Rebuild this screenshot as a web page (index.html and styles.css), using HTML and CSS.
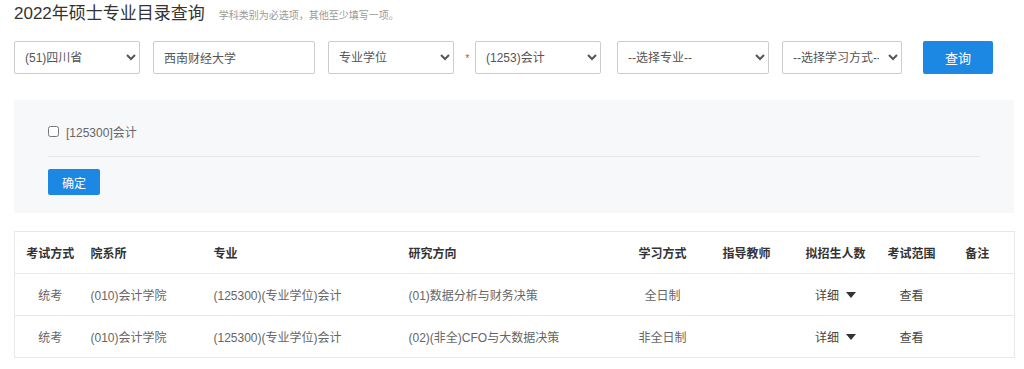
FILE: index.html
```html
<!DOCTYPE html>
<html lang="zh-CN">
<head>
<meta charset="utf-8">
<title>2022年硕士专业目录查询</title>
<link rel="stylesheet" href="styles.css">
</head>
<body>
<div class="page">
  <div class="title-row">
    <h1 class="title">2022年硕士专业目录查询</h1>
    <span class="hint">学科类别为必选项，其他至少填写一项。</span>
  </div>
  <form class="filters">
    <select class="ctl sel-prov"><option>(51)四川省</option></select>
    <input class="ctl inp-school" type="text" value="西南财经大学">
    <select class="ctl sel-type"><option>专业学位</option></select>
    <span class="req">*</span>
    <select class="ctl sel-subject"><option>(1253)会计</option></select>
    <select class="ctl sel-major"><option>--选择专业--</option></select>
    <select class="ctl sel-mode"><option>--选择学习方式--</option></select>
    <button class="btn btn-query" type="button">查询</button>
  </form>
  <div class="panel">
    <label class="check"><input type="checkbox"><span>[125300]会计</span></label>
    <div class="divider"></div>
    <button class="btn btn-ok" type="button">确定</button>
  </div>
  <table class="result">
    <colgroup>
      <col class="c1"><col class="c2"><col class="c3"><col class="c4"><col class="c5"><col class="c6"><col class="c7"><col class="c8"><col class="c9">
    </colgroup>
    <thead>
      <tr>
        <th class="ctr">考试方式</th>
        <th>院系所</th>
        <th>专业</th>
        <th>研究方向</th>
        <th class="ctr">学习方式</th>
        <th class="ctr">指导教师</th>
        <th class="ctr">拟招生人数</th>
        <th class="ctr">考试范围</th>
        <th class="ctr">备注</th>
      </tr>
    </thead>
    <tbody>
      <tr>
        <td class="ctr">统考</td>
        <td>(010)会计学院</td>
        <td>(125300)(专业学位)会计</td>
        <td>(01)数据分析与财务决策</td>
        <td class="ctr">全日制</td>
        <td class="ctr"></td>
        <td class="ctr"><span class="detail">详细<i class="tri"></i></span></td>
        <td class="ctr"><span class="view">查看</span></td>
        <td class="ctr"></td>
      </tr>
      <tr>
        <td class="ctr">统考</td>
        <td>(010)会计学院</td>
        <td>(125300)(专业学位)会计</td>
        <td>(02)(非全)CFO与大数据决策</td>
        <td class="ctr">非全日制</td>
        <td class="ctr"></td>
        <td class="ctr"><span class="detail">详细<i class="tri"></i></span></td>
        <td class="ctr"><span class="view">查看</span></td>
        <td class="ctr"></td>
      </tr>
    </tbody>
  </table>
</div>
</body>
</html>
```

FILE: styles.css
```css
* { box-sizing: border-box; }
html, body { margin: 0; padding: 0; background: #fff; }
body {
  font-family: "Liberation Sans", "Noto Sans CJK SC", sans-serif;
  font-size: 12px;
  color: #555;
}
.page { padding: 0 10px 0 14px; width: 1024px; }

.title-row {
  display: flex;
  align-items: baseline;
  height: 30px;
  padding-top: 3px;
}
.title {
  margin: 0;
  font-size: 17px;
  font-weight: normal;
  color: #333;
  line-height: 22px;
}
.hint {
  margin-left: 14px;
  font-size: 10px;
  color: #999;
}

.filters {
  display: flex;
  align-items: center;
  margin-top: 11px;
  height: 33px;
}
.ctl {
  height: 33px;
  border: 1px solid #ccc;
  border-radius: 2px;
  background: #fff;
  font-family: inherit;
  font-size: 12px;
  color: #555;
  padding: 0 6px;
  margin: 0;
  outline: none;
}
input.ctl { padding: 0 10px; }
.sel-prov { width: 126px; }
.inp-school { width: 162px; margin-left: 13px; }
.sel-type { width: 126px; margin-left: 13px; }
.req {
  width: 21px;
  text-align: center;
  color: #e44;
  font-size: 11px;
  padding-left: 6px;
}
.sel-subject { width: 126px; }
.sel-major { width: 152px; margin-left: 16px; }
.sel-mode { width: 120px; margin-left: 13px; }

.btn {
  border: none;
  border-radius: 2px;
  background: #1c88e3;
  color: #fff;
  font-family: inherit;
  cursor: pointer;
  padding: 0;
}
.btn-query {
  width: 70px;
  height: 33px;
  margin-left: 21px;
  font-size: 13px;
}

.panel {
  margin-top: 26px;
  width: 1000px;
  background: #f7f8fa;
  padding: 25px 34px 18px 34px;
}
.check {
  display: flex;
  align-items: center;
  height: 12px;
  color: #666;
}
.check input {
  width: 11px;
  height: 11px;
  margin: 0 7px 0 0;
}
.divider {
  height: 1px;
  background: #e6e7e9;
  margin-top: 19px;
  width: 932px;
}
.btn-ok {
  margin-top: 12px;
  width: 52px;
  height: 26px;
  font-size: 12px;
}

.result {
  margin-top: 18px;
  width: 1000px;
  border-collapse: collapse;
  table-layout: fixed;
  border: 1px solid #e8e8e8;
}
.c1 { width: 71px; }
.c2 { width: 123px; }
.c3 { width: 195px; }
.c4 { width: 217px; }
.c5 { width: 84px; }
.c6 { width: 84px; }
.c7 { width: 94px; }
.c8 { width: 58px; }
.c9 { width: 74px; }
.result th, .result td {
  height: 42px;
  padding: 0 0 0 5px;
  text-align: left;
  border-bottom: 1px solid #e8e8e8;
  white-space: nowrap;
}
.result th {
  color: #333;
  font-weight: bold;
}
.result td { color: #666; }
.result .ctr { text-align: center; padding: 0; }
.detail { color: #444; display: inline-flex; align-items: center; }
.tri {
  display: inline-block;
  width: 0;
  height: 0;
  margin-left: 7px;
  border-left: 5px solid transparent;
  border-right: 5px solid transparent;
  border-top: 6px solid #333;
}
.view { color: #444; }
```
